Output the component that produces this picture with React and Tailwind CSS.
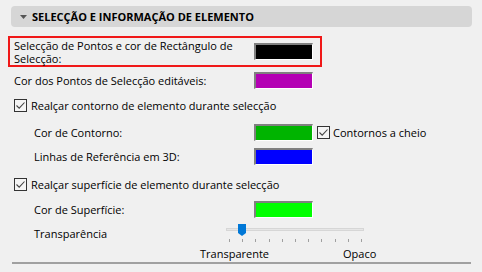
import React from "react";

function Swatch({ color }) {
  return (
    <div
      className="w-[59px] h-[17px] border-t-2 border-l-2 border-r border-b border-t-[#808080] border-l-[#808080] border-r-white border-b-white"
      style={{ backgroundColor: color }}
    />
  );
}

function Check() {
  return (
    <div className="w-[13px] h-[13px] border border-[#333] bg-[#f4f4f4] flex items-center justify-center shrink-0">
      <svg width="11" height="11" viewBox="0 0 11 11">
        <path d="M1.5 5.5 L4.2 8.2 L9.5 2.5" fill="none" stroke="#444" strokeWidth="1.1" />
      </svg>
    </div>
  );
}

export default function App() {
  const ticks = [0, 1, 2, 3, 4, 5, 6, 7, 8, 9, 10];
  return (
    <div
      className="w-[482px] h-[272px] bg-[#f0f0f0] overflow-hidden text-[11px] text-black leading-none"
      style={{ fontFamily: '"Open Sans", "Noto Sans", sans-serif' }}
    >
      <div className="ml-[11px] mr-[10px] mt-[6px] h-[21px] rounded-[4px] bg-[#d6d6d6] flex items-center">
        <svg width="7" height="4" viewBox="0 0 7 4" className="ml-[9px]">
          <path d="M0 0 L7 0 L3.5 4 Z" fill="#555" />
        </svg>
        <span className="ml-[5px] font-bold text-[11px]">SELECÇÃO E INFORMAÇÃO DE ELEMENTO</span>
      </div>

      <div className="ml-[8px] mt-[9px] w-[314px] h-[31px] border-2 border-[#f01818] flex items-center">
        <div className="w-[244px] pl-[4px] leading-[13px]">
          Selecção de Pontos e cor de Rectângulo de
          <br />
          Selecção:
        </div>
        <Swatch color="#000000" />
      </div>

      <div className="mt-[3px] h-[21px] flex items-center">
        <div className="w-[254px] pl-[14px]">Cor dos Pontos de Selecção editáveis:</div>
        <Swatch color="#b400b4" />
      </div>

      <div className="mt-[4px] h-[21px] flex items-center pl-[14px] gap-[4px]">
        <Check />
        <span>Realçar contorno de elemento durante selecção</span>
      </div>

      <div className="mt-[6px] h-[21px] flex items-center">
        <div className="w-[254px] pl-[34px]">Cor de Contorno:</div>
        <Swatch color="#00b400" />
        <div className="ml-[4px] flex items-center gap-[3px]">
          <Check />
          <span>Contornos a cheio</span>
        </div>
      </div>

      <div className="mt-[3px] h-[21px] flex items-center">
        <div className="w-[254px] pl-[34px]">Linhas de Referência em 3D:</div>
        <Swatch color="#0000ff" />
      </div>

      <div className="mt-[7px] h-[21px] flex items-center pl-[14px] gap-[4px]">
        <Check />
        <span>Realçar superfície de elemento durante selecção</span>
      </div>

      <div className="mt-[4px] h-[21px] flex items-center">
        <div className="w-[254px] pl-[34px]">Cor de Superfície:</div>
        <Swatch color="#00ff00" />
      </div>

      <div className="mt-[3px] h-[20px] flex">
        <div className="w-[226px] pl-[34px] pt-[5px]">Transparência</div>
        <div className="relative w-[140px] h-[20px]">
          <div className="absolute left-0 top-[5px] w-[138px] h-[3px] bg-[#e6e6e6] border border-[#d6d6d6]" />
          <div className="absolute left-[12px] top-[1px]">
            <svg width="8" height="12" viewBox="0 0 8 12">
              <path d="M0 0 H8 V9 L4 12 L0 9 Z" fill="#0078d7" />
            </svg>
          </div>
          <div className="absolute left-[3px] top-[16px] w-[133px] flex justify-between">
            {ticks.map((t) => (
              <div key={t} className="w-px h-[3px] bg-[#a0a0a0]" />
            ))}
          </div>
        </div>
      </div>

      <div className="mt-[2px] h-[16px] flex items-center">
        <span className="ml-[200px]">Transparente</span>
        <span className="ml-[74px]">Opaco</span>
      </div>

      <div className="mt-[1px] ml-[12px] w-[459px] h-[2px] bg-[#a0a0a0]" />
    </div>
  );
}
